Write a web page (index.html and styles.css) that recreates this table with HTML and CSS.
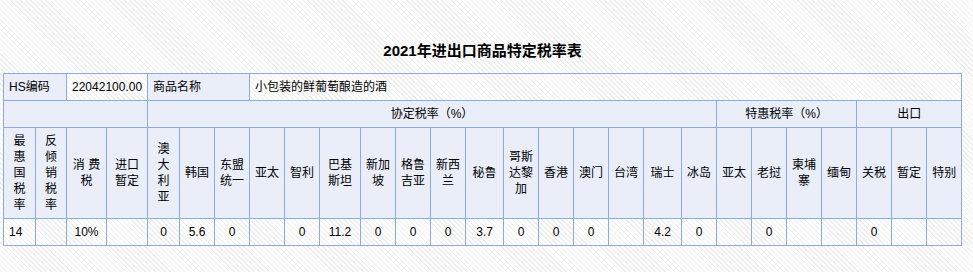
FILE: index.html
```html
<!DOCTYPE html>
<html lang="zh">
<head>
<meta charset="utf-8">
<title>2021年进出口商品特定税率表</title>
<link rel="stylesheet" href="styles.css">
</head>
<body>
<div class="page">
  <h1 class="title">2021年进出口商品特定税率表</h1>
  <table class="rates">
    <colgroup>
      <col class="w32"><col class="w31"><col class="w40"><col class="w41">
      <col class="w32"><col class="w35"><col class="w35"><col class="w35"><col class="w35">
      <col class="w41"><col class="w35"><col class="w35"><col class="w35"><col class="w38">
      <col class="w35"><col class="w35"><col class="w35"><col class="w35"><col class="w38">
      <col class="w35"><col class="w35"><col class="w35"><col class="w35"><col class="w35">
      <col class="w35"><col class="w35"><col class="w35">
    </colgroup>
    <tbody>
      <tr>
        <td class="hd left" colspan="2">HS编码</td>
        <td class="left" colspan="2">22042100.00</td>
        <td class="hd left" colspan="3">商品名称</td>
        <td class="left" colspan="20">小包装的鲜葡萄酿造的酒</td>
      </tr>
      <tr>
        <td class="hd" colspan="4"></td>
        <td class="hd" colspan="16">协定税率（%）</td>
        <td class="hd" colspan="4">特惠税率（%）</td>
        <td class="hd" colspan="3">出口</td>
      </tr>
      <tr class="heads">
        <td class="hd">最<br>惠<br>国<br>税<br>率</td>
        <td class="hd">反<br>倾<br>销<br>税<br>率</td>
        <td class="hd">消 费<br>税</td>
        <td class="hd">进口<br>暂定</td>
        <td class="hd">澳<br>大<br>利<br>亚</td>
        <td class="hd">韩国</td>
        <td class="hd">东盟<br>统一</td>
        <td class="hd">亚太</td>
        <td class="hd">智利</td>
        <td class="hd">巴基<br>斯坦</td>
        <td class="hd">新加<br>坡</td>
        <td class="hd">格鲁<br>吉亚</td>
        <td class="hd">新西<br>兰</td>
        <td class="hd">秘鲁</td>
        <td class="hd">哥斯<br>达黎<br>加</td>
        <td class="hd">香港</td>
        <td class="hd">澳门</td>
        <td class="hd">台湾</td>
        <td class="hd">瑞士</td>
        <td class="hd">冰岛</td>
        <td class="hd">亚太</td>
        <td class="hd">老挝</td>
        <td class="hd">柬埔<br>寨</td>
        <td class="hd">缅甸</td>
        <td class="hd">关税</td>
        <td class="hd">暂定</td>
        <td class="hd">特别</td>
      </tr>
      <tr>
        <td class="left">14</td>
        <td></td>
        <td>10%</td>
        <td></td>
        <td>0</td>
        <td>5.6</td>
        <td>0</td>
        <td></td>
        <td>0</td>
        <td>11.2</td>
        <td>0</td>
        <td>0</td>
        <td>0</td>
        <td>3.7</td>
        <td>0</td>
        <td>0</td>
        <td>0</td>
        <td></td>
        <td>4.2</td>
        <td>0</td>
        <td></td>
        <td>0</td>
        <td></td>
        <td></td>
        <td>0</td>
        <td></td>
        <td></td>
      </tr>
    </tbody>
  </table>
</div>
</body>
</html>
```

FILE: styles.css
```css
html, body {
  margin: 0;
  padding: 0;
}

body {
  background-color: #ffffff;
  background-image: repeating-linear-gradient(45deg, #ffffff 0, #ffffff 2.5px, #ededed 2.5px, #ededed 3.5px);
  font-family: "Liberation Sans", "Noto Sans CJK SC", sans-serif;
  font-size: 12px;
  color: #000;
}

.page {
  padding: 0 3px;
}

.title {
  margin: 0;
  padding: 41px 0 12px;
  width: 959px;
  text-align: center;
  font-size: 15px;
  line-height: 20px;
  font-weight: bold;
}

.rates {
  width: 959px;
  table-layout: fixed;
  border-collapse: collapse;
}

.rates td {
  border: 1px solid #8eaae2;
  padding: 5px 4px;
  line-height: 16px;
  text-align: center;
  vertical-align: middle;
  white-space: nowrap;
  overflow: hidden;
}

.rates td.left {
  text-align: left;
  padding-left: 5px;
}

.rates td.hd {
  background: #e9eef9;
}

.w31 { width: 31px; }
.w32 { width: 32px; }
.w35 { width: 35px; }
.w38 { width: 38px; }
.w40 { width: 40px; }
.w41 { width: 41px; }
```
